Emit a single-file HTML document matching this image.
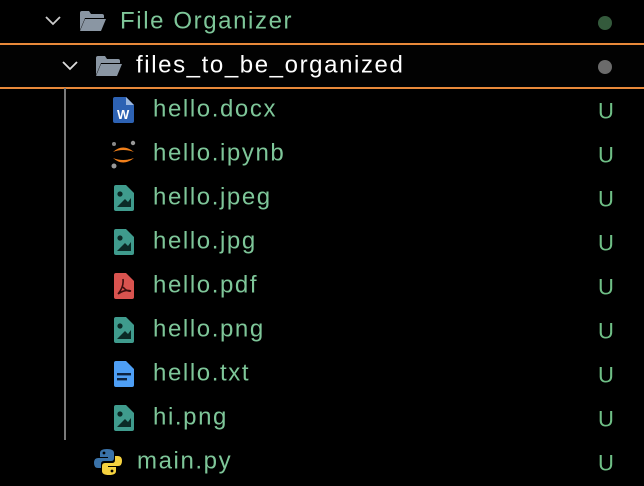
<!DOCTYPE html>
<html><head><style>
html,body{margin:0;padding:0;background:#000;width:644px;height:486px;overflow:hidden}
body{font-family:"Liberation Sans",sans-serif;font-size:24px;color:#7ec699;letter-spacing:1.6px;position:relative}
.row{position:absolute;left:0;width:644px;height:44px}
.t{position:absolute;top:50%;transform:translateY(-52%);white-space:nowrap}
.ic{position:absolute}
.u{position:absolute;left:598px;top:50%;transform:translateY(-45%);font-size:22px;color:#6fbf86;letter-spacing:0}
.dot{position:absolute;left:598px;width:14px;height:14px;border-radius:50%}
.sel{position:absolute;left:0;top:43px;width:644px;height:42px;border-top:2px solid #e8893a;border-bottom:2px solid #e8893a;background:#020202}
.guide{position:absolute;left:64px;top:88px;width:2px;height:352px;background:#7a7a7a}
</style></head><body>
<div class="sel"></div>
<div class="guide"></div>

<div class="row" style="top:0">
<svg class="ic" style="left:44px;top:14px" width="18" height="12"><path d="M2 3 L9 10 L16 3" stroke="#ccc" stroke-width="1.8" fill="none"/></svg>
<svg class="ic" style="left:79px;top:10px" width="28" height="22"><path d="M1 3 Q1 1 3 1 H10 L12 4 H23 Q25 4 25 6 V8 H6 L1 20 Z" fill="#8a96a3"/><path d="M6 9 H27 L22 21 H1 Z" fill="#8a96a3"/></svg>
<div class="t" style="left:120px">File Organizer</div>
<div class="dot" style="top:16px;background:#345a3c"></div>
</div>

<div class="row" style="top:44px">
<svg class="ic" style="left:61px;top:15px" width="18" height="12"><path d="M2 3 L9 10 L16 3" stroke="#ddd" stroke-width="1.8" fill="none"/></svg>
<svg class="ic" style="left:95px;top:11px" width="28" height="22"><path d="M1 3 Q1 1 3 1 H10 L12 4 H23 Q25 4 25 6 V8 H6 L1 20 Z" fill="#8a96a3"/><path d="M6 9 H27 L22 21 H1 Z" fill="#8a96a3"/></svg>
<div class="t" style="left:136px;color:#fff">files_to_be_organized</div>
<div class="dot" style="top:16px;background:#6b6b6b"></div>
</div>

<div class="row" style="top:88px">
<svg class="ic" style="left:112px;top:9px" width="24" height="28"><path d="M1 2 Q1 0 3 0 H14 L22 8 V24 Q22 26 20 26 H3 Q1 26 1 24 Z" fill="#2d62b3"/><path d="M14 0 V8 H22" fill="#9cb8e0"/><text x="5" y="22" font-family="Liberation Sans" font-weight="bold" font-size="13" fill="#fff" letter-spacing="0">W</text></svg>
<div class="t" style="left:153px">hello.docx</div><div class="u">U</div>
</div>

<div class="row" style="top:132px">
<svg class="ic" style="left:110px;top:8px" width="28" height="30"><circle cx="4" cy="4" r="2" fill="#888"/><circle cx="23" cy="3" r="2.2" fill="#999"/><circle cx="4" cy="26" r="2.5" fill="#999"/><path d="M3 12 Q13 3 24 12 Q13 8 3 12Z" fill="#f07f1a"/><path d="M3 18 Q13 27 24 18 Q13 22 3 18Z" fill="#f07f1a"/></svg>
<div class="t" style="left:153px">hello.ipynb</div><div class="u">U</div>
</div>

<div class="row" style="top:176px">
<svg class="ic" style="left:113px;top:9px" width="22" height="26"><path d="M1 2 Q1 0 3 0 H13 L21 8 V24 Q21 26 19 26 H3 Q1 26 1 24 Z" fill="#3f9b8d"/><circle cx="7" cy="9" r="2.6" fill="#0b2a26"/><path d="M4 22 L12 14 L15 17 L18 13 V22 Z" fill="#0b2a26"/></svg>
<div class="t" style="left:153px">hello.jpeg</div><div class="u">U</div>
</div>
<div class="row" style="top:220px">
<svg class="ic" style="left:113px;top:9px" width="22" height="26"><path d="M1 2 Q1 0 3 0 H13 L21 8 V24 Q21 26 19 26 H3 Q1 26 1 24 Z" fill="#3f9b8d"/><circle cx="7" cy="9" r="2.6" fill="#0b2a26"/><path d="M4 22 L12 14 L15 17 L18 13 V22 Z" fill="#0b2a26"/></svg>
<div class="t" style="left:153px">hello.jpg</div><div class="u">U</div>
</div>
<div class="row" style="top:264px">
<svg class="ic" style="left:113px;top:9px" width="22" height="26"><path d="M1 2 Q1 0 3 0 H13 L21 8 V24 Q21 26 19 26 H3 Q1 26 1 24 Z" fill="#d9534f"/><path d="M10 6 Q11 14 5 21 M10 14 Q14 19 18 18 M5 21 Q12 16 18 18" stroke="#3a0d0d" stroke-width="1.6" fill="none"/></svg>
<div class="t" style="left:153px">hello.pdf</div><div class="u">U</div>
</div>
<div class="row" style="top:308px">
<svg class="ic" style="left:113px;top:9px" width="22" height="26"><path d="M1 2 Q1 0 3 0 H13 L21 8 V24 Q21 26 19 26 H3 Q1 26 1 24 Z" fill="#3f9b8d"/><circle cx="7" cy="9" r="2.6" fill="#0b2a26"/><path d="M4 22 L12 14 L15 17 L18 13 V22 Z" fill="#0b2a26"/></svg>
<div class="t" style="left:153px">hello.png</div><div class="u">U</div>
</div>
<div class="row" style="top:352px">
<svg class="ic" style="left:113px;top:9px" width="22" height="26"><path d="M1 2 Q1 0 3 0 H13 L21 8 V24 Q21 26 19 26 H3 Q1 26 1 24 Z" fill="#4e9ff5"/><rect x="4" y="12" width="14" height="2.4" fill="#0d2340"/><rect x="4" y="17" width="10" height="2.4" fill="#0d2340"/></svg>
<div class="t" style="left:153px">hello.txt</div><div class="u">U</div>
</div>
<div class="row" style="top:396px">
<svg class="ic" style="left:113px;top:9px" width="22" height="26"><path d="M1 2 Q1 0 3 0 H13 L21 8 V24 Q21 26 19 26 H3 Q1 26 1 24 Z" fill="#3f9b8d"/><circle cx="7" cy="9" r="2.6" fill="#0b2a26"/><path d="M4 22 L12 14 L15 17 L18 13 V22 Z" fill="#0b2a26"/></svg>
<div class="t" style="left:153px">hi.png</div><div class="u">U</div>
</div>

<div class="row" style="top:440px">
<svg class="ic" style="left:94px;top:8px" width="28" height="28"><path d="M13 1 Q6 1 6 5 V9 H14 V10 H4 Q0 10 0 15 Q0 20 4 20 H7 V16 Q7 13 10 13 H17 Q20 13 20 10 V5 Q20 1 13 1Z" fill="#3a72a8"/><circle cx="10" cy="5" r="1.4" fill="#000"/><path d="M15 27 Q22 27 22 23 V19 H14 V18 H24 Q28 18 28 13 Q28 8 24 8 H21 V12 Q21 15 18 15 H11 Q8 15 8 18 V23 Q8 27 15 27Z" fill="#f5d23f"/><circle cx="18" cy="23" r="1.4" fill="#000"/></svg>
<div class="t" style="left:137px">main.py</div><div class="u">U</div>
</div>
</body></html>
